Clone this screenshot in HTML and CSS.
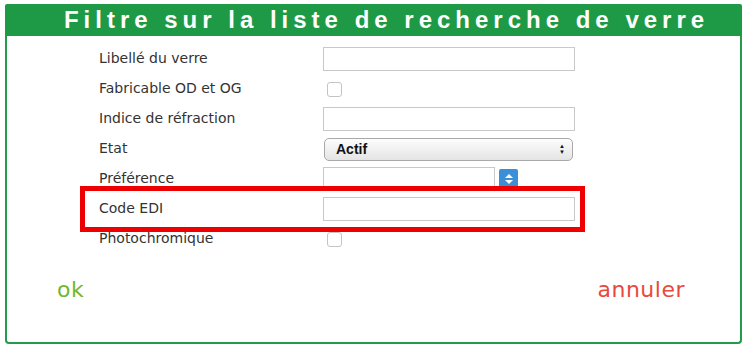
FILE: index.html
```html
<!DOCTYPE html>
<html lang="fr">
<head>
  <meta charset="UTF-8" />
  <title>Filtre sur la liste de recherche de verre</title>
  <link rel="stylesheet" href="styles.css">
</head>
<body>
  <div class="dialog">
    <div class="dialog-title">Filtre sur la liste de recherche de verre</div>
    <div class="dialog-body">
      <form class="filter-form">
        <label class="row-label">Libellé du verre</label>
        <div class="row-field"><input type="text" class="text-input" /></div>

        <label class="row-label">Fabricable OD et OG</label>
        <div class="row-field"><span class="check"></span></div>

        <label class="row-label">Indice de réfraction</label>
        <div class="row-field"><input type="text" class="text-input" /></div>

        <label class="row-label">Etat</label>
        <div class="row-field">
          <div class="select-box">
            <span>Actif</span>
            <span class="select-arrows">&#9650;<br>&#9660;</span>
          </div>
        </div>

        <label class="row-label">Préférence</label>
        <div class="row-field">
          <input type="text" class="text-input short" />
          <span class="spin">
            <svg width="10" height="12" viewBox="0 0 10 12">
              <path d="M1 5 L5 1 L9 5 Z M1 7 L5 11 L9 7 Z" fill="#fff"/>
            </svg>
          </span>
        </div>

        <label class="row-label">Code EDI</label>
        <div class="row-field"><input type="text" class="text-input" /></div>

        <label class="row-label">Photochromique</label>
        <div class="row-field"><span class="check"></span></div>
      </form>

      <div class="actions">
        <a class="btn-ok">ok</a>
        <a class="btn-cancel">annuler</a>
      </div>

      <div class="highlight"></div>
    </div>
  </div>
</body>
</html>
```

FILE: styles.css
```css
body {
  margin: 0;
  background-color: #fff;
  font-family: "DejaVu Sans", Verdana, sans-serif;
}

.dialog {
  width: 737px;
  margin: 4px 0 0 5px;
}

.dialog-title {
  background-color: #1e9a47;
  color: #fff;
  height: 32px;
  line-height: 32px;
  padding-left: 26px;
  text-align: center;
  font-family: "Liberation Sans", Arial, sans-serif;
  font-weight: bold;
  font-size: 24px;
  letter-spacing: 5px;
  border-radius: 2px 2px 0 0;
}

.dialog-body {
  position: relative;
  height: 308px;
  border: 2px solid #239a4c;
  border-top: none;
  border-radius: 0 0 4px 4px;
  box-sizing: border-box;
}

.filter-form {
  display: grid;
  grid-template-columns: 224px 260px;
  grid-auto-rows: 30px;
  padding: 11px 0 0 92px;
}

.row-label {
  font-size: 14px;
  color: #333;
  padding-top: 3px;
}

.row-field {
  display: flex;
  align-items: center;
  height: 30px;
  margin-top: -3px;
}

.text-input {
  width: 252px;
  height: 24px;
  border: 1px solid #c9c9c9;
  box-sizing: border-box;
  padding: 0;
  margin: 0;
  background: #fff;
}

.text-input.short {
  width: 172px;
}

.check {
  display: inline-block;
  width: 13px;
  height: 13px;
  margin-left: 4px;
  border: 1px solid #c4c4c4;
  border-radius: 3px;
}

.select-box {
  width: 249px;
  height: 23px;
  margin-left: 1px;
  box-sizing: border-box;
  border: 1px solid #a9a9a9;
  border-radius: 5px;
  background: linear-gradient(#fdfdfd, #e4e4e4);
  display: flex;
  align-items: center;
  justify-content: space-between;
  padding: 0 7px 0 11px;
  font-family: "Liberation Sans", Arial, sans-serif;
  font-size: 14px;
  font-weight: bold;
  color: #111;
}

.select-arrows {
  font-size: 6px;
  line-height: 6px;
  text-align: center;
}

.spin {
  display: inline-flex;
  align-items: center;
  justify-content: center;
  width: 19px;
  height: 20px;
  margin-left: 4px;
  background-color: #3a8fd8;
  border-radius: 2px;
}

.actions {
  display: flex;
  justify-content: space-between;
  padding: 20px 55px 0 50px;
  font-family: "DejaVu Sans", sans-serif;
  font-size: 22px;
  letter-spacing: 0.5px;
}

.btn-ok {
  color: #6db833;
}

.btn-cancel {
  color: #e9493d;
}

.highlight {
  position: absolute;
  left: 73px;
  top: 150px;
  width: 505px;
  height: 46px;
  border: 5px solid #ee0000;
  box-sizing: border-box;
}
```
